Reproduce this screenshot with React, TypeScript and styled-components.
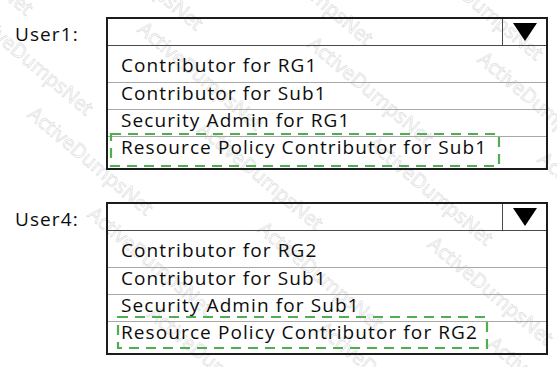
import React from 'react';
import styled, { createGlobalStyle } from 'styled-components';

const GlobalStyle = createGlobalStyle`
  html, body {
    margin: 0;
    background: #ffffff;
  }
  body {
    font-family: "Open Sans", Lato, sans-serif;
    color: #0c0c0c;
  }
`;

const StyledPage = styled.div`
  position: relative;
  width: 557px;
  height: 367px;
  box-sizing: border-box;
  padding: 17px 0 0 15px;
  display: flex;
  flex-direction: column;
  gap: 32px;
  overflow: hidden;
`;

const StyledWatermark = styled.div`
  position: absolute;
  inset: 0;
  pointer-events: none;
  z-index: 0;
`;

const StyledMark = styled.span`
  position: absolute;
  font-family: "Open Sans", sans-serif;
  font-size: 20px;
  white-space: nowrap;
  color: transparent;
  -webkit-text-stroke: 0.6px #dadada;
  transform: rotate(40deg);
  transform-origin: 0 0;
`;

const StyledQuestion = styled.div`
  position: relative;
  z-index: 1;
  display: flex;
  align-items: flex-start;
`;

const StyledLabel = styled.div`
  width: 91px;
  padding-top: 6px;
  font-size: 19px;
  line-height: 22px;
  letter-spacing: 1.1px;
`;

const StyledDropdown = styled.div`
  width: 442px;
  box-sizing: border-box;
  border: 2px solid #1c1c1c;
`;

const StyledHeader = styled.div`
  display: flex;
  height: 26px;
  border-bottom: 1px solid #4a4a4a;
`;

const StyledHeaderField = styled.div`
  flex: 1;
`;

const StyledToggle = styled.div`
  width: 43px;
  border-left: 1px solid #4a4a4a;
  display: flex;
  align-items: center;
  justify-content: center;
`;

const StyledOptions = styled.ul`
  list-style: none;
  margin: 0;
  padding: 9px 0 5px;
`;

const StyledOption = styled.li`
  position: relative;
  height: 26px;
  padding-left: 13px;
  font-size: 19px;
  line-height: 21px;
  letter-spacing: 1.1px;
  white-space: nowrap;
  border-top: 1px solid #a8a8a8;

  &:first-child {
    border-top: none;
    height: 27px;
  }
`;

const StyledHighlight = styled.svg<{
  $left: number;
  $top: number;
  $width: number;
  $height: number;
}>`
  position: absolute;
  left: ${(p) => p.$left}px;
  top: ${(p) => p.$top}px;
  width: ${(p) => p.$width}px;
  height: ${(p) => p.$height}px;
  overflow: visible;
  pointer-events: none;
`;

type Box = { left: number; top: number; width: number; height: number };

type Question = {
  label: string;
  options: string[];
  answer: number;
  box: Box;
};

const QUESTIONS: Question[] = [
  {
    label: 'User1:',
    options: [
      'Contributor for RG1',
      'Contributor for Sub1',
      'Security Admin for RG1',
      'Resource Policy Contributor for Sub1',
    ],
    answer: 3,
    box: { left: 2, top: -4, width: 390, height: 34 },
  },
  {
    label: 'User4:',
    options: [
      'Contributor for RG2',
      'Contributor for Sub1',
      'Security Admin for Sub1',
      'Resource Policy Contributor for RG2',
    ],
    answer: 3,
    box: { left: 9, top: -6, width: 371, height: 33 },
  },
];

const MARKS: { x: number; y: number }[] = [];
for (let row = -2; row < 4; row += 1) {
  for (let col = 0; col < 4; col += 1) {
    MARKS.push({ x: col * 170 + row * 60 - 20, y: row * 100 + col * 15 });
  }
}

const Highlight: React.FC<{ box: Box }> = ({ box }) => (
  <StyledHighlight
    $left={box.left}
    $top={box.top}
    $width={box.width}
    $height={box.height}
    viewBox={`0 0 ${box.width} ${box.height}`}
  >
    <rect
      x={1}
      y={1}
      width={box.width - 2}
      height={box.height - 2}
      fill="none"
      stroke="#4fae4f"
      strokeWidth={2.2}
      strokeDasharray="10 7"
    />
  </StyledHighlight>
);

const TriangleIcon: React.FC = () => (
  <svg width="24" height="18" viewBox="0 0 24 18">
    <polygon points="0,0 24,0 12,18" fill="#000000" />
  </svg>
);

const App: React.FC = () => {
  return (
    <>
      <GlobalStyle />
      <StyledPage>
        <StyledWatermark aria-hidden="true">
          {MARKS.map((mark) => (
            <StyledMark
              key={`${mark.x}-${mark.y}`}
              style={{ left: mark.x, top: mark.y }}
            >
              ActiveDumpsNet
            </StyledMark>
          ))}
        </StyledWatermark>
        {QUESTIONS.map((question) => (
          <StyledQuestion key={question.label}>
            <StyledLabel>{question.label}</StyledLabel>
            <StyledDropdown>
              <StyledHeader>
                <StyledHeaderField />
                <StyledToggle>
                  <TriangleIcon />
                </StyledToggle>
              </StyledHeader>
              <StyledOptions>
                {question.options.map((option, index) => (
                  <StyledOption key={option}>
                    {option}
                    {index === question.answer && (
                      <Highlight box={question.box} />
                    )}
                  </StyledOption>
                ))}
              </StyledOptions>
            </StyledDropdown>
          </StyledQuestion>
        ))}
      </StyledPage>
    </>
  );
};

export default App;
